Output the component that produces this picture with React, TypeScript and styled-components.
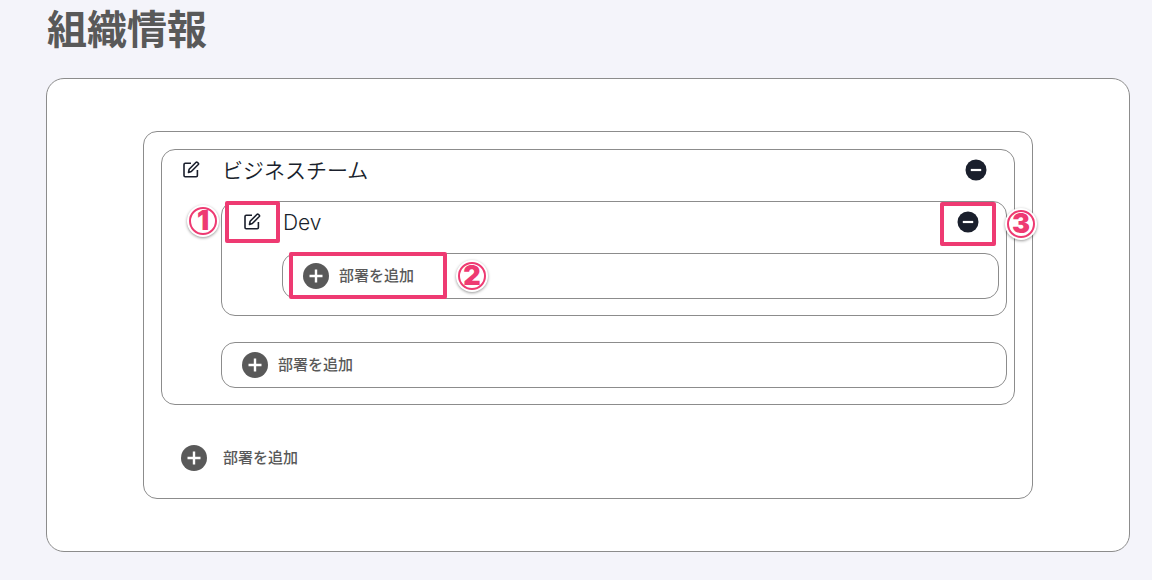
import React from "react";
import styled, { createGlobalStyle } from "styled-components";

const PINK = "#ee3a72";
const INK = "#1a1f2c";
const GRAY = "#595959";
const LINE = "#8c8c8c";

const GlobalStyle = createGlobalStyle`
  *, *::before, *::after { box-sizing: border-box; }
  body {
    margin: 0;
    background: #f4f4fa;
    color: ${INK};
    font-family: "Noto Sans CJK JP", sans-serif;
  }
`;

const Page = styled.main`
  padding: 0 22px 28px 46px;
`;

const Title = styled.h1`
  margin: 0 0 22px;
  padding: 4px 0 0 1px;
  font-family: "Liberation Sans", "Noto Sans CJK JP", sans-serif;
  font-size: 40px;
  line-height: 52px;
  font-weight: 700;
  color: ${GRAY};
`;

const Panel = styled.section`
  padding: 52px 96px;
  background: #fff;
  border: 1px solid ${LINE};
  border-radius: 18px;
`;

const Tree = styled.div`
  padding: 17px 17px 18px;
  border: 1px solid ${LINE};
  border-radius: 14px;
`;

const Department = styled.article<{ $nested?: boolean }>`
  padding: 0 7px 16px ${(p) => (p.$nested ? 60 : 59)}px;
  border: 1px solid ${LINE};
  border-radius: 14px;
`;

const Row = styled.header`
  position: relative;
  display: flex;
  align-items: center;
  height: 40px;
  margin: 0 20px 11px -39px;
`;

const Name = styled.h2`
  flex: 1;
  margin: 0;
  padding: 2px 0 0 22px;
  font-family: "Inter", "Noto Sans CJK JP", sans-serif;
  font-size: 21px;
  line-height: 24px;
  font-weight: 350;
`;

const IconButton = styled.button`
  display: grid;
  place-items: center;
  padding: 0;
  border: 0;
  background: none;
  color: inherit;
`;

const AddBox = styled.div<{ $spaced?: boolean }>`
  position: relative;
  margin-top: ${(p) => (p.$spaced ? 26 : 0)}px;
  padding: 0 20px;
  border: 1px solid ${LINE};
  border-radius: 14px;
`;

const RootAdd = styled.div`
  padding: 31px 20px 0;
`;

const AddButton = styled.button<{ $wide?: boolean }>`
  display: flex;
  align-items: center;
  gap: ${(p) => (p.$wide ? 16 : 10)}px;
  height: 44px;
  padding: 0;
  border: 0;
  background: none;
  color: ${GRAY};
  font: 500 15px/24px "Noto Sans CJK JP", sans-serif;
`;

const AddLabel = styled.span`
  padding-bottom: 2px;
`;

const Highlight = styled.span<{ $left?: number; $right?: number; $width: number; $height: number; $top: number }>`
  position: absolute;
  top: ${(p) => p.$top}px;
  ${(p) => (p.$right === undefined ? `left: ${p.$left}px;` : `right: ${p.$right}px;`)}
  width: ${(p) => p.$width}px;
  height: ${(p) => p.$height}px;
  border: 4px solid ${PINK};
  border-radius: 2px;
  pointer-events: none;
`;

const Badge = styled.span<{ $side: "before" | "after"; $top: number }>`
  position: absolute;
  top: ${(p) => p.$top}px;
  ${(p) => (p.$side === "before" ? "right: 100%; margin-right: 12px;" : "left: 100%; margin-left: 15px;")}
  display: grid;
  place-items: center;
  width: 28px;
  height: 28px;
  border: 2px solid ${PINK};
  border-radius: 50%;
  background: #fff;
  box-shadow: 0 0 0 2px #fff, 0 1px 3px 2px rgba(0, 0, 0, 0.4);
  color: ${PINK};
  font: 900 27px/24px "Inter", "Liberation Sans", sans-serif;
`;

const EditIcon = () => (
  <svg width="18" height="18" viewBox="0 0 18 18" fill="none" stroke="currentColor" strokeWidth="1.6" aria-hidden="true">
    <path d="M9 2.3H3.2Q2 2.3 2 3.5v11q0 1.2 1.2 1.2h11q1.2 0 1.2-1.2V9" />
    <path d="M6.5 11.5l.6-3.2 7-7q.6-.5 1.2 0l1 1q.5.6 0 1.2l-7 7z" strokeLinejoin="round" />
  </svg>
);

const MinusIcon = () => (
  <svg width="22" height="22" viewBox="0 0 22 22" aria-hidden="true">
    <circle cx="11" cy="11" r="10.5" fill="currentColor" />
    <path d="M5.8 11h10.4" stroke="#fff" strokeWidth="2.2" />
  </svg>
);

const PlusIcon = () => (
  <svg width="26" height="26" viewBox="0 0 26 26" aria-hidden="true">
    <circle cx="13" cy="13" r="13" fill="currentColor" />
    <path d="M6.5 13h13M13 6.5v13" stroke="#fff" strokeWidth="2.4" />
  </svg>
);

const Add = ({ wide }: { wide?: boolean }) => (
  <AddButton type="button" $wide={wide}>
    <PlusIcon />
    <AddLabel>部署を追加</AddLabel>
  </AddButton>
);

export default function App() {
  return (
    <>
      <GlobalStyle />
      <Page>
        <Title>組織情報</Title>
        <Panel>
          <Tree>
            <Department>
              <Row>
                <IconButton type="button" aria-label="編集"><EditIcon /></IconButton>
                <Name>ビジネスチーム</Name>
                <IconButton type="button" aria-label="削除"><MinusIcon /></IconButton>
              </Row>
              <Department $nested>
                <Row>
                  <IconButton type="button" aria-label="編集"><EditIcon /></IconButton>
                  <Name>Dev</Name>
                  <IconButton type="button" aria-label="削除"><MinusIcon /></IconButton>
                  <Highlight $left={-18} $top={-1} $width={55} $height={42}>
                    <Badge $side="before" $top={2}>1</Badge>
                  </Highlight>
                  <Highlight $right={-17} $top={0} $width={56} $height={44}>
                    <Badge $side="after" $top={4}>3</Badge>
                  </Highlight>
                </Row>
                <AddBox>
                  <Add />
                  <Highlight $left={6} $top={-2} $width={158} $height={47}>
                    <Badge $side="after" $top={6}>2</Badge>
                  </Highlight>
                </AddBox>
              </Department>
              <AddBox $spaced>
                <Add />
              </AddBox>
            </Department>
            <RootAdd>
              <Add wide />
            </RootAdd>
          </Tree>
        </Panel>
      </Page>
    </>
  );
}
